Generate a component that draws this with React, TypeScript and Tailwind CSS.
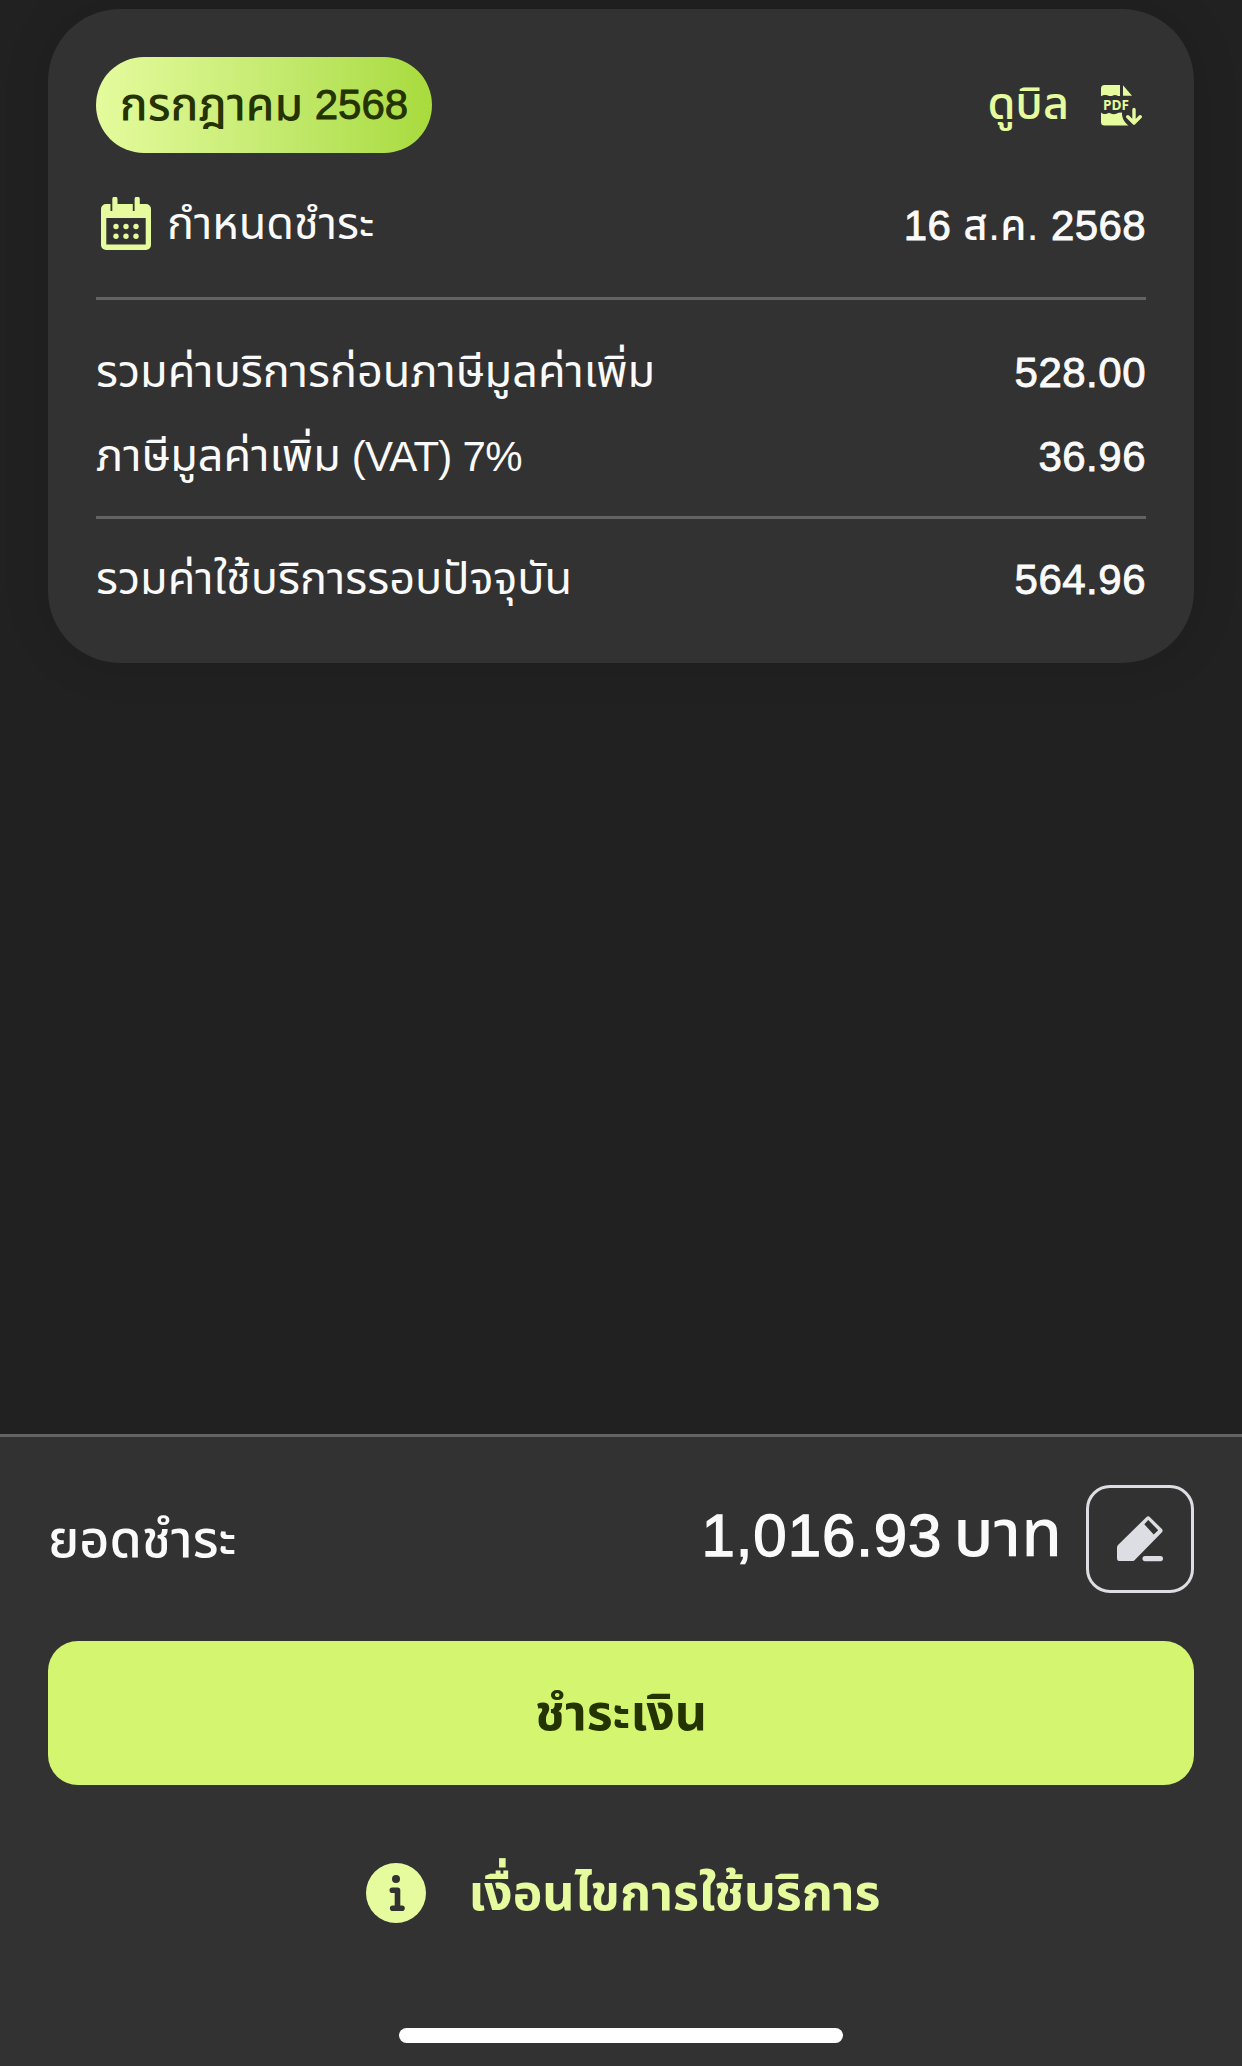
const charges = [
  { label: "รวมค่าบริการก่อนภาษีมูลค่าเพิ่ม", suffix: "", amount: "528.00" },
  { label: "ภาษีมูลค่าเพิ่ม", suffix: " (VAT) 7%", amount: "36.96" },
];

function CalendarIcon() {
  return (
    <svg className="mb-[3px] h-[53px] w-[50px]" viewBox="0 0 50 53" fill="#e5fb9d">
      <path
        fillRule="evenodd"
        d="M5 7H9.5V14H11.3V2.2a2.6 2.6 0 0 1 5.2 0V7H31.8V14H33.6V2.2a2.6 2.6 0 0 1 5.2 0V7H45a5 5 0 0 1 5 5V48a5 5 0 0 1-5 5H5a5 5 0 0 1-5-5V12a5 5 0 0 1 5-5ZM5.3 21V47.5H44.7V21Z"
      />
      {[15, 25, 35].map((x) => (
        <g key={x}>
          <circle cx={x} cy="29.5" r="2.7" />
          <circle cx={x} cy="39.3" r="2.7" />
        </g>
      ))}
    </svg>
  );
}

function PdfIcon() {
  return (
    <svg className="h-[41px] w-[41px]" viewBox="0 0 41 41" fill="#e5fb9d">
      <path d="M3.5 0H19V11H17C15 9.5 13 9.5 11 11H8C6 9.5 2.5 9.5 0 11.3V3.5A3.5 3.5 0 0 1 3.5 0Z" />
      <path d="M22 0.3L31 10.7H22Z" />
      <path d="M0 27.5C2.5 29.5 5 29.5 8 27.8C11 29.8 15 29.5 17.5 27.8L21 27.5C20.8 33 23 37 27.5 40.5H3.5A3.5 3.5 0 0 1 0 37Z" />
      <text x="2" y="24.5" fontSize="14" fontWeight="700" textLength="26" lengthAdjust="spacingAndGlyphs" className="font-['Open_Sans',sans-serif]">
        PDF
      </text>
      <path d="M33 24.5V37M26.8 31.8L33 38L39.2 31.8" fill="none" stroke="#e5fb9d" strokeWidth="3.4" strokeLinecap="round" strokeLinejoin="round" />
    </svg>
  );
}

function EditIcon() {
  return (
    <svg className="h-[46px] w-[46px]" viewBox="0 0 46 46" fill="#dcdee3">
      <path
        fillRule="evenodd"
        d="M29.3 1.2a2.6 2.6 0 0 1 3.7 0L44.7 12.8a2.6 2.6 0 0 1 0 3.7L17.5 44.2a3 3 0 0 1-2.2.9H3.2A3.2 3.2 0 0 1 0 41.9V31.5a3.6 3.6 0 0 1 1-2.5ZM31.2 4L27.3 8.3L36.7 18.4L41.2 14.2Z"
      />
      <rect x="25.5" y="40" width="20.5" height="5.2" rx="2.6" />
    </svg>
  );
}

function InfoIcon() {
  return (
    <svg className="h-[60px] w-[60px]" viewBox="0 0 60 60">
      <circle cx="30" cy="30" r="30" fill="#e5fb9d" />
      <circle cx="30" cy="16" r="4" fill="#323232" />
      <path d="M26.3 27.3H31.5V45.3M26.7 45.3H36" fill="none" stroke="#323232" strokeWidth="5.6" strokeLinecap="round" strokeLinejoin="round" />
    </svg>
  );
}

export default function App() {
  return (
    <div className="flex h-[2066px] w-[1242px] flex-col overflow-hidden bg-[#212121] font-['Liberation_Sans','Noto_Sans_Thai',sans-serif] text-[42px] text-[#fafafa]">
      {/* Bill */}
      <main className="flex-1 px-12 pt-[9px]">
        <section className="h-[654px] rounded-[72px] bg-[#323232] px-12 pt-12 shadow-[0_0_48px_rgba(0,0,0,0.12)]">
          <div className="flex items-center justify-between">
            <div className="flex h-24 w-[336px] items-center justify-center rounded-full bg-linear-to-r from-[#e5fb9d] to-[#a8db3c] pb-0.5 font-medium whitespace-pre text-[#243300]">
              <span className="text-[46px]">กรกฎาคม</span>
              <span className="[-webkit-text-stroke:0.9px]"> 2568</span>
            </div>
            <button className="flex items-center gap-8 pr-[4px] font-medium text-[#e5fb9d]">
              <span className="pb-0.5 text-[45px]">ดูบิล</span>
              <PdfIcon />
            </button>
          </div>

          <div className="mt-[30px] flex h-21 items-center justify-between">
            <div className="flex items-center gap-4 pl-[5px]">
              <CalendarIcon />
              <span className="pb-0.5 text-[45px]">กำหนดชำระ</span>
            </div>
            <span className="font-medium tracking-[0.4px]">
              <span className="[-webkit-text-stroke:0.9px]">16</span>
              {" ส.ค. "}
              <span className="[-webkit-text-stroke:0.9px]">2568</span>
            </span>
          </div>

          <div className="mt-[30px] border-y-3 border-[#636363] pt-[30px] pb-[18px]">
            {charges.map((c) => (
              <div key={c.label} className="flex h-21 items-center justify-between">
                <span className="whitespace-pre">
                  <span className="text-[45px]">{c.label}</span>
                  <span className="tracking-[-0.7px]">{c.suffix}</span>
                </span>
                <span className="tracking-[0.5px] [-webkit-text-stroke:0.9px]">{c.amount}</span>
              </div>
            ))}
          </div>

          <div className="mt-[18px] flex h-21 items-center justify-between">
            <span className="text-[45px]">รวมค่าใช้บริการรอบปัจจุบัน</span>
            <span className="tracking-[0.5px] [-webkit-text-stroke:0.9px]">564.96</span>
          </div>
        </section>
      </main>

      {/* Payment */}
      <footer className="flex h-[632px] flex-col border-t-3 border-[#636363] bg-[#323232] px-12 pt-12">
        <div className="flex h-27 items-center justify-between">
          <span className="text-[52px] font-medium">ยอดชำระ</span>
          <div className="flex items-center gap-6">
            <div className="flex items-baseline gap-[11px] pb-[11px] text-[60px] font-medium">
              <span className="tracking-[0.9px] [-webkit-text-stroke:1.3px]">1,016.93</span>
              <span className="text-[66px]">บาท</span>
            </div>
            <button className="flex size-27 items-center justify-center rounded-3xl border-3 border-[#dcdee3]">
              <EditIcon />
            </button>
          </div>
        </div>

        <button className="mt-12 h-36 w-full rounded-[30px] bg-[#d4f570] text-[50px] font-bold text-[#243300]">
          ชำระเงิน
        </button>

        <button className="mt-[78px] flex h-15 items-center justify-center gap-[42px] pl-[5px] text-[50px] font-bold text-[#e5fb9d]">
          <InfoIcon />
          <span>เงื่อนไขการใช้บริการ</span>
        </button>

        <div className="mt-[105px] h-[15px] w-[444px] shrink-0 self-center rounded-full bg-white" />
      </footer>
    </div>
  );
}
